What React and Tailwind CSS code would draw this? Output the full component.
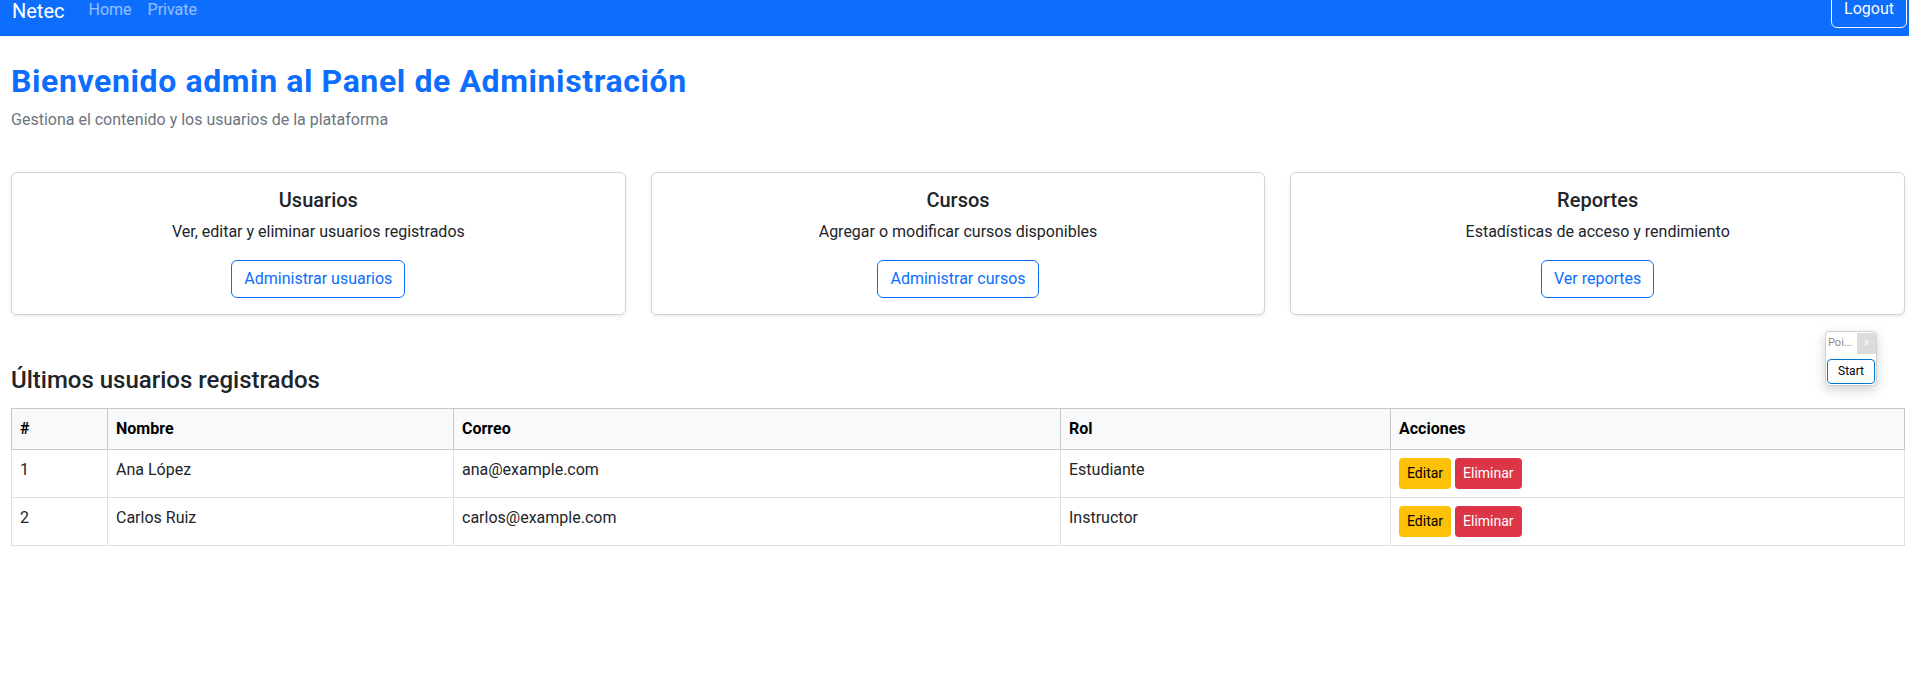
const USERS = [
  { id: 1, nombre: 'Ana López', correo: 'ana@example.com', rol: 'Estudiante' },
  { id: 2, nombre: 'Carlos Ruiz', correo: 'carlos@example.com', rol: 'Instructor' },
]

const CARDS = [
  { title: 'Usuarios', text: 'Ver, editar y eliminar usuarios registrados', action: 'Administrar usuarios' },
  { title: 'Cursos', text: 'Agregar o modificar cursos disponibles', action: 'Administrar cursos' },
  { title: 'Reportes', text: 'Estadísticas de acceso y rendimiento', action: 'Ver reportes' },
]

function Navbar() {
  return (
    <nav className="h-[36px] overflow-hidden bg-[#0d6efd] pl-[12px] pr-[2px] flex items-start justify-between">
      <div className="flex items-start">
        <span className="text-[20px] leading-[30px] text-white mt-[-4px] mr-[16px]">Netec</span>
        <a className="text-[16px] leading-[24px] text-white/55 px-[8px] mt-[-2px]">Home</a>
        <a className="text-[16px] leading-[24px] text-white/55 px-[8px] mt-[-2px]">Private</a>
      </div>
      <button className="mt-[-10px] h-[38px] px-[12px] border border-[#f8f9fa] rounded-[6px] text-[16px] leading-[24px] text-[#f8f9fa]">
        Logout
      </button>
    </nav>
  )
}

function ActionCard({ title, text, action }) {
  return (
    <div className="border border-black/[0.175] rounded-[6px] shadow-[0_2px_4px_rgba(0,0,0,0.075)] px-[16px] pt-[15px] pb-[16px] text-center">
      <h5 className="text-[20px] leading-[24px] font-medium text-[#212529] mb-[8px]">{title}</h5>
      <p className="text-[16px] leading-[24px] text-[#212529] mb-[16px]">{text}</p>
      <button className="h-[38px] px-[12px] border border-[#0d6efd] rounded-[6px] text-[16px] leading-[24px] text-[#0d6efd]">
        {action}
      </button>
    </div>
  )
}

export default function App() {
  return (
    <div className="min-h-[693px] bg-white text-[#212529] relative" style={{ fontFamily: 'Roboto, "Noto Sans", sans-serif' }}>
      <Navbar />

      <main className="pl-[11px] pr-[4px] pt-[26px]">
        <h2 className="text-[32px] leading-[38px] font-bold tracking-[0.6px] text-[#0d6efd] mb-[8px]">
          Bienvenido admin al Panel de Administración
        </h2>
        <p className="text-[16px] leading-[24px] text-[#6c757d] mb-[40px]">
          Gestiona el contenido y los usuarios de la plataforma
        </p>

        {/* Cards */}
        <div className="grid grid-cols-3 gap-[25px]">
          {CARDS.map(c => <ActionCard key={c.title} {...c} />)}
        </div>

        <h4 className="text-[24px] leading-[29px] font-medium text-[#212529] mt-[51px] mb-[13px]">
          Últimos usuarios registrados
        </h4>

        <table className="w-full border-collapse text-[16px] leading-[24px] text-[#212529]">
          <colgroup>
            <col className="w-[96px]" />
            <col className="w-[346px]" />
            <col className="w-[607px]" />
            <col className="w-[330px]" />
            <col />
          </colgroup>
          <thead>
            <tr className="bg-[#f8f9fa]">
              {['#', 'Nombre', 'Correo', 'Rol', 'Acciones'].map(h => (
                <th key={h} className="text-left font-bold text-black border border-[#c6c7c8] px-[8px] py-[8px]">{h}</th>
              ))}
            </tr>
          </thead>
          <tbody>
            {USERS.map(u => (
              <tr key={u.id}>
                <td className="border border-[#dee2e6] px-[8px] py-[8px] align-top">{u.id}</td>
                <td className="border border-[#dee2e6] px-[8px] py-[8px] align-top">{u.nombre}</td>
                <td className="border border-[#dee2e6] px-[8px] py-[8px] align-top">{u.correo}</td>
                <td className="border border-[#dee2e6] px-[8px] py-[8px] align-top">{u.rol}</td>
                <td className="border border-[#dee2e6] px-[8px] py-[8px] align-top">
                  <div className="flex gap-[4px]">
                    <button className="h-[31px] px-[8px] rounded-[4px] bg-[#ffc107] text-black text-[14px] leading-[21px]">Editar</button>
                    <button className="h-[31px] px-[8px] rounded-[4px] bg-[#dc3545] text-white text-[14px] leading-[21px]">Eliminar</button>
                  </div>
                </td>
              </tr>
            ))}
          </tbody>
        </table>
      </main>

      {/* floating extension widget */}
      <div className="absolute left-[1825px] top-[331px] w-[52px] bg-white border border-[#cfcfcf] rounded-[4px] shadow-[0_4px_12px_rgba(0,0,0,0.18)]">
        <div className="flex items-center justify-between h-[22px]">
          <span className="text-[11px] text-[#8a8a8a] pl-[2px]">Poi...</span>
          <span className="w-[19px] h-[21px] bg-[#dcdcdc] text-[9px] text-white flex items-center justify-center rounded-tr-[3px]">x</span>
        </div>
        <div className="px-[1px] pt-[4px] pb-[1px]">
          <button className="w-full h-[25px] border border-[#0078d4] rounded-[4px] text-[12px] text-black bg-white">Start</button>
        </div>
      </div>
    </div>
  )
}
